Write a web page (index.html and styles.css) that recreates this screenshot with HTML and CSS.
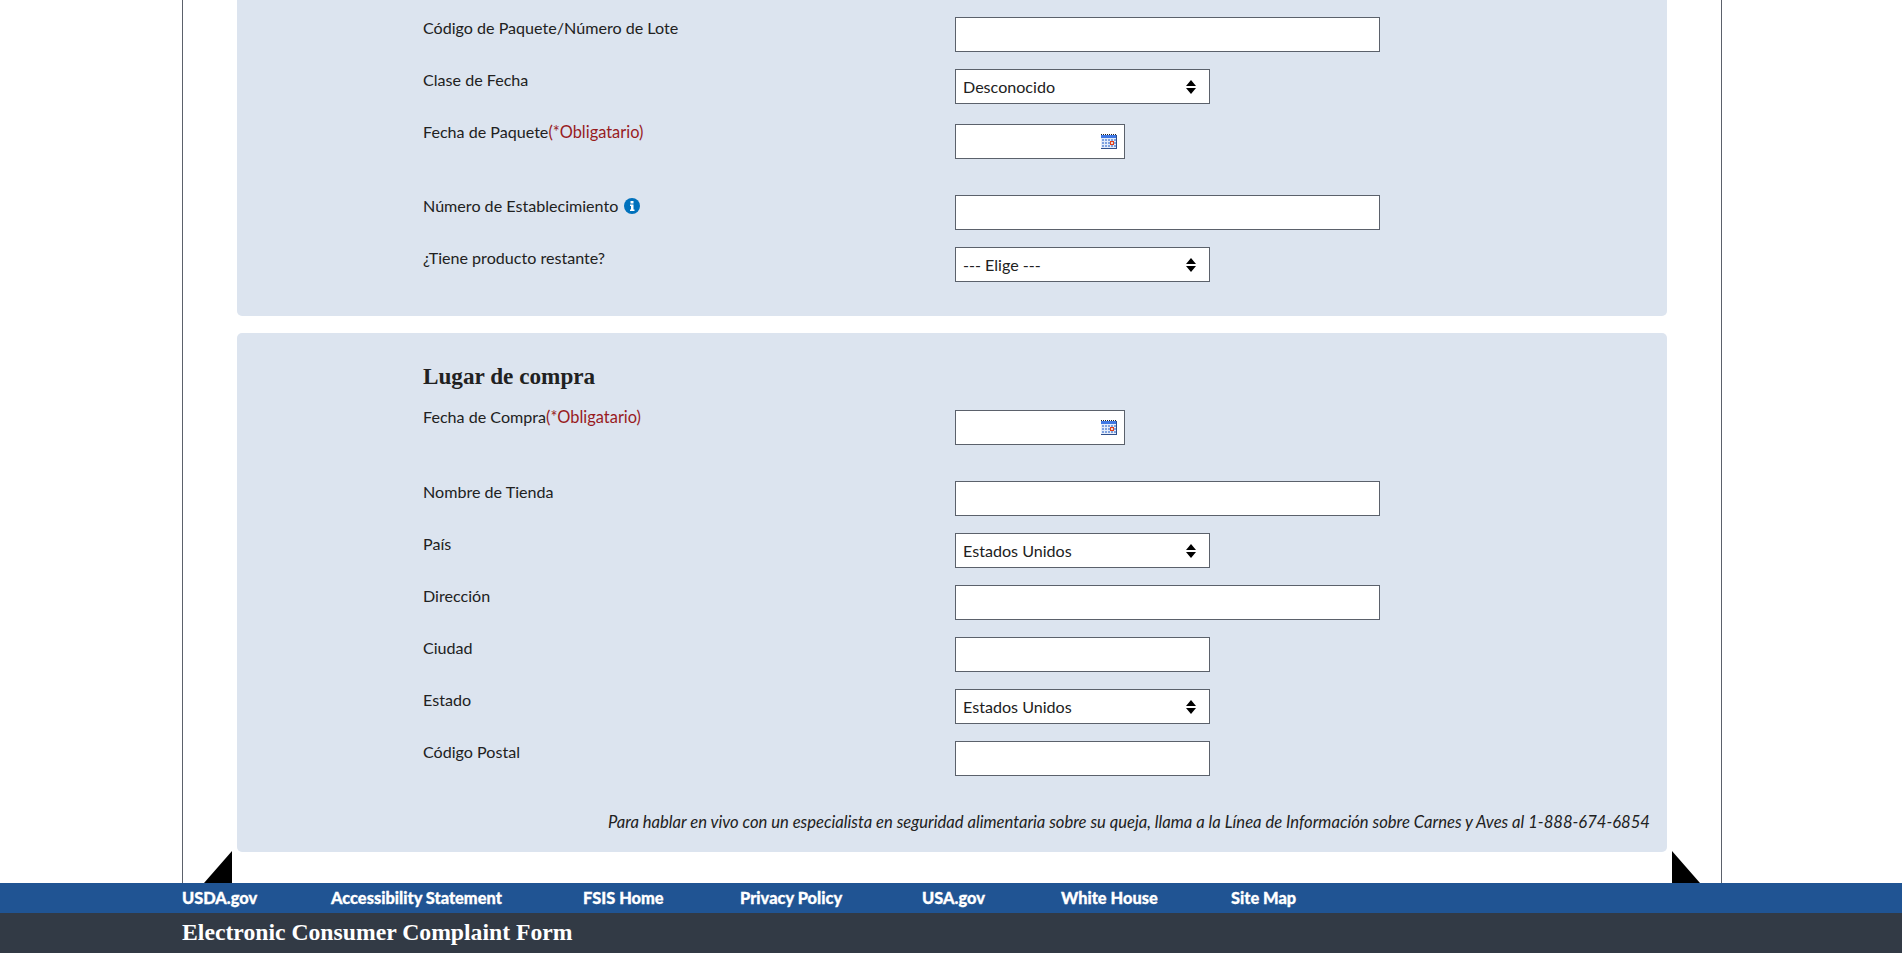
FILE: index.html
```html
<!DOCTYPE html>
<html lang="es">
<head>
<meta charset="utf-8">
<title>Electronic Consumer Complaint Form</title>
<link rel="stylesheet" href="styles.css">
</head>
<body>
<main class="frame">
  <section class="panel panel-top">
    <div class="row"><label class="label">Código de Paquete/Número de Lote</label><input class="field wide" type="text"></div>
    <div class="row"><label class="label">Clase de Fecha</label>
      <div class="select-wrap"><select class="field select"><option>Desconocido</option></select>
        <svg class="arrows" viewBox="0 0 10 14"><path d="M5 0 10 6H0ZM5 14 0 8H10Z"/></svg></div></div>
    <div class="row date-row"><label class="label">Fecha de Paquete<span class="req">(*Obligatario)</span></label>
      <div class="date-wrap"><input class="field date" type="text">
        <svg class="cal" viewBox="0 0 16 15"><path d="M0 .5h16" stroke="#222" stroke-dasharray="1 1" fill="none"/><rect y="1" width="16" height="14" fill="#2f4f8c"/><rect y="1" width="15" height="3" fill="#3f78e4"/><rect y="4" width="15" height="10" fill="#e4ecfa"/><path d="M1 5h2v2H1ZM4 5h2v2H4ZM7 5h2v2H7ZM10 5h2v2h-2ZM13 5h2v2h-2ZM1 8h2v2H1ZM4 8h2v2H4ZM7 8h2v2H7ZM13 8h2v2h-2ZM1 11h2v2H1ZM4 11h2v2H4ZM7 11h2v2H7ZM10 11h2v2h-2ZM13 11h2v2h-2Z" fill="#7fa2e0"/><rect x="9.500" y="7.500" width="3" height="3" fill="#f4d9cf" stroke="#e2401c"/></svg></div></div>
    <div class="row"><label class="label">Número de Establecimiento <svg class="info" viewBox="0 0 16 16"><circle cx="8" cy="8" r="8" fill="#0071bc"/><path d="M6.500 3h3v2.500h-3ZM6 6.500h3.500v5h1V13H6v-1.500h1v-3.500H6Z" fill="#fff"/></svg></label><input class="field wide" type="text"></div>
    <div class="row"><label class="label">¿Tiene producto restante?</label>
      <div class="select-wrap"><select class="field select"><option>--- Elige ---</option></select>
        <svg class="arrows" viewBox="0 0 10 14"><path d="M5 0 10 6H0ZM5 14 0 8H10Z"/></svg></div></div>
  </section>

  <section class="panel panel-bottom">
    <h2 class="heading">Lugar de compra</h2>
    <div class="row date-row purchase-date"><label class="label">Fecha de Compra<span class="req">(*Obligatario)</span></label>
      <div class="date-wrap"><input class="field date" type="text">
        <svg class="cal" viewBox="0 0 16 15"><path d="M0 .5h16" stroke="#222" stroke-dasharray="1 1" fill="none"/><rect y="1" width="16" height="14" fill="#2f4f8c"/><rect y="1" width="15" height="3" fill="#3f78e4"/><rect y="4" width="15" height="10" fill="#e4ecfa"/><path d="M1 5h2v2H1ZM4 5h2v2H4ZM7 5h2v2H7ZM10 5h2v2h-2ZM13 5h2v2h-2ZM1 8h2v2H1ZM4 8h2v2H4ZM7 8h2v2H7ZM13 8h2v2h-2ZM1 11h2v2H1ZM4 11h2v2H4ZM7 11h2v2H7ZM10 11h2v2h-2ZM13 11h2v2h-2Z" fill="#7fa2e0"/><rect x="9.500" y="7.500" width="3" height="3" fill="#f4d9cf" stroke="#e2401c"/></svg></div></div>
    <div class="row"><label class="label">Nombre de Tienda</label><input class="field wide" type="text"></div>
    <div class="row"><label class="label">País</label>
      <div class="select-wrap"><select class="field select"><option>Estados Unidos</option></select>
        <svg class="arrows" viewBox="0 0 10 14"><path d="M5 0 10 6H0ZM5 14 0 8H10Z"/></svg></div></div>
    <div class="row"><label class="label">Dirección</label><input class="field wide" type="text"></div>
    <div class="row"><label class="label">Ciudad</label><input class="field medium" type="text"></div>
    <div class="row"><label class="label">Estado</label>
      <div class="select-wrap"><select class="field select"><option>Estados Unidos</option></select>
        <svg class="arrows" viewBox="0 0 10 14"><path d="M5 0 10 6H0ZM5 14 0 8H10Z"/></svg></div></div>
    <div class="row"><label class="label">Código Postal</label><input class="field medium" type="text"></div>
    <p class="note">Para hablar en vivo con un especialista en seguridad alimentaria sobre su queja, llama a la Línea de Información sobre Carnes y Aves al 1-888-674-6854</p>
  </section>
  <span class="corner corner-left"></span>
  <span class="corner corner-right"></span>
</main>
<footer class="footer">
  <nav class="links">
    <a href="#">USDA.gov</a>
    <a href="#">Accessibility Statement</a>
    <a href="#">FSIS Home</a>
    <a href="#">Privacy Policy</a>
    <a href="#">USA.gov</a>
    <a href="#">White House</a>
    <a href="#">Site Map</a>
  </nav>
  <div class="title">Electronic Consumer Complaint Form</div>
</footer>
</body>
</html>
```

FILE: styles.css
```css
* { box-sizing: border-box; }
html, body { margin: 0; height: 100%; overflow: hidden; }
body {
  display: flex;
  flex-direction: column;
  height: 953px;
  background: #fff;
  color: #212121;
  font-family: "Lato", "Liberation Sans", sans-serif;
  font-size: 16.1px;
}
.frame {
  position: relative;
  flex: 1;
  min-height: 0;
  width: 1540px;
  margin-left: 182px;
  padding: 0 54px;
  border-left: 1px solid #5b616b;
  border-right: 1px solid #5b616b;
  overflow: hidden;
}
.panel {
  background: #dce4ef;
  padding-left: 186px;
  border-radius: 5px;
}
.panel-top {
  padding-top: 17px;
  padding-bottom: 17px;
  border-radius: 0 0 5px 5px;
  margin-bottom: 17px;
}
.panel-bottom {
  padding-top: 30px;
  padding-bottom: 19px;
}
.heading {
  margin: 0 0 17px;
  height: 27px;
  font-family: "Liberation Serif", serif;
  font-size: 23.2px;
  line-height: 27px;
  font-weight: 700;
  color: #212121;
}
.row {
  display: flex;
  align-items: flex-start;
  margin-bottom: 17px;
}
.date-row { margin-bottom: 36px; }
.label {
  width: 532px;
  flex: none;
  line-height: 22px;
}
.req { color: #981b1e; font-size: 16.4px; }
.info { width: 16px; height: 16px; margin-left: 2px; vertical-align: -2px; }
.field {
  display: block;
  height: 35px;
  margin: 0;
  padding: 0 7px;
  border: 1px solid #5b616b;
  border-radius: 0;
  background: #fff;
  color: #212121;
  font: inherit;
}
.wide { width: 425px; }
.medium { width: 255px; }
.select { width: 255px; appearance: none; }
.select-wrap, .date-wrap { position: relative; }
.arrows {
  position: absolute;
  top: 11px;
  left: 231px;
  width: 10px;
  height: 14px;
  fill: #000;
  pointer-events: none;
}
.date-wrap { margin-top: 3px; }
.purchase-date { margin-top: -1px; }
.purchase-date .date-wrap { margin-top: 4px; }
.date { width: 170px; }
.cal {
  position: absolute;
  top: 10px;
  left: 146px;
  width: 16px;
  height: 15px;
}
.note {
  margin: 35px 17px 0 0;
  line-height: 22px;
  text-align: right;
  font-size: 16.6px;
  font-style: italic;
  white-space: nowrap;
}
.corner {
  position: absolute;
  bottom: 0;
  height: 32px;
  width: 28px;
  background: #000;
}
.corner-left { left: 21px; clip-path: polygon(100% 0, 100% 100%, 0 100%); }
.corner-right { right: 21px; clip-path: polygon(0 0, 100% 100%, 0 100%); }
.footer { flex: none; }
.links {
  display: grid;
  grid-template-columns: 149px 252px 157px 182px 139px 170px auto;
  height: 30px;
  padding: 0 0 2px 182px;
  background: #205493;
  align-items: center;
}
.links a {
  color: #fff;
  font-size: 16.4px;
  font-weight: 900;
  text-decoration: none;
  -webkit-text-stroke: 0.3px #fff;
}
.title {
  height: 40px;
  padding-left: 182px;
  background: #323a45;
  color: #fff;
  font-family: "Liberation Serif", serif;
  font-size: 23.7px;
  font-weight: 700;
  line-height: 39px;
}
```
